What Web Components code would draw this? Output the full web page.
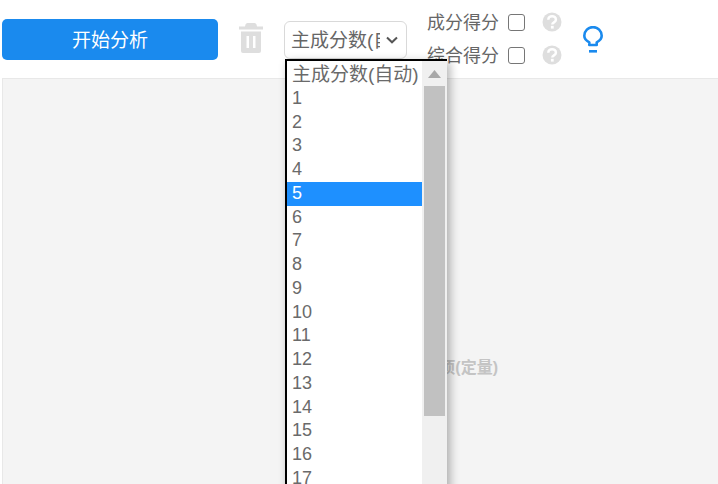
<!DOCTYPE html>
<html lang="zh">
<head>
<meta charset="utf-8">
<title>分析</title>
<style>
  html, body { margin: 0; height: 100%; overflow: hidden; background: #fff; }
  body { font-family: "Liberation Sans", "Noto Sans CJK SC", sans-serif; color: #666; }
</style>
</head>
<body>
<analysis-page>
  <analysis-toolbar slot="toolbar">
    <start-button>开始分析</start-button>
    <trash-button></trash-button>
    <component-select></component-select>
    <score-options></score-options>
    <hint-bulb></hint-bulb>
  </analysis-toolbar>
  <drop-panel slot="panel">分析项(定量)</drop-panel>
</analysis-page>

<script>
  class AnalysisPage extends HTMLElement {
    constructor() {
      super();
      this.attachShadow({ mode: 'open' });
      this.shadowRoot.innerHTML = `
        <style>
          :host { display: flex; flex-direction: column; width: 718px; height: 484px; overflow: hidden; }
        </style>
        <slot name="toolbar"></slot>
        <slot name="panel"></slot>
      `;
    }
  }

  class AnalysisToolbar extends HTMLElement {
    constructor() {
      super();
      this.attachShadow({ mode: 'open' });
      this.shadowRoot.innerHTML = `
        <style>
          :host { display: flex; flex: none; align-items: flex-start; height: 78px; padding: 0 0 0 2px; position: relative; z-index: 2; }
        </style>
        <slot></slot>
      `;
    }
  }

  class StartButton extends HTMLElement {
    constructor() {
      super();
      this.attachShadow({ mode: 'open' });
      this.shadowRoot.innerHTML = `
        <style>
          :host { display: block; margin-top: 19px; }
          button {
            display: block; width: 216px; height: 41px; padding: 0 0 2px; border: 0; border-radius: 5px;
            background: #1a8aee; color: #fff; font: 19px "Liberation Sans", "Noto Sans CJK SC", sans-serif;
          }
        </style>
        <button type="button"><slot></slot></button>
      `;
    }
  }

  class TrashButton extends HTMLElement {
    constructor() {
      super();
      this.attachShadow({ mode: 'open' });
      this.shadowRoot.innerHTML = `
        <style>
          :host { display: block; margin: 23px 0 0 21px; width: 24px; height: 30px; }
          svg { display: block; }
        </style>
        <svg width="24" height="30" viewBox="0 0 24 30">
          <path fill="#dedede" fill-rule="evenodd" d="M8.500 0h7q1.500 0 2 1.500L18 3.500h6v3H0v-3h6l.5-2Q7 0 8.500 0zM2 8.500h20V28q0 2-2 2H4q-2 0-2-2zM7.500 13v12h2.500V13zM14 13v12h2.500V13z"/>
        </svg>
      `;
    }
  }

  class ComponentSelect extends HTMLElement {
    constructor() {
      super();
      this.attachShadow({ mode: 'open' });
      const options = ['主成分数(自动)'];
      for (let i = 1; i <= 20; i++) options.push(String(i));
      const rows = options.map((text, i) =>
        `<div class="option${i === 0 ? ' title' : ''}${text === '5' ? ' selected' : ''}">${text}</div>`).join('');
      this.shadowRoot.innerHTML = `
        <style>
          :host { display: block; position: relative; margin: 21px 0 0 21px; width: 123px; height: 38px; }
          .field {
            box-sizing: border-box; display: flex; align-items: center; width: 123px; height: 38px;
            padding: 0 6px 4px; border: 1px solid #d9d9d9; border-radius: 6px; background: #fff;
            font-size: 19px; color: #666;
          }
          .value { width: 89px; overflow: hidden; white-space: nowrap; }
          .field svg { margin: 4px 0 0 6px; flex: none; }
          .list {
            position: absolute; left: 1px; top: 38px; box-sizing: border-box;
            display: flex; width: 162px; height: 440px;
            border-top: 2px solid #000; border-left: 2px solid #000; background: #fff;
            box-shadow: 3px 3px 9px rgba(0, 0, 0, .3);
          }
          .options { flex: 1; min-width: 0; padding-top: 2px; }
          .option { box-sizing: border-box; height: 23.75px; line-height: 23.75px; padding-left: 5px; font-size: 18px; color: #6a6a6a; white-space: nowrap; }
          .title { font-size: 19px; }
          .selected { background: #1e90ff; color: #fff; }
          .scroll { box-sizing: border-box; flex: none; width: 25px; padding: 0 2px; background: #f0f0f0; }
          .arrow { height: 25px; display: flex; align-items: center; justify-content: center; }
          .thumb { height: 330px; background: #c1c1c1; }
        </style>
        <div class="field">
          <span class="value">主成分数(自动)</span>
          <svg width="12" height="8" viewBox="0 0 12 8">
            <path d="M1 1.500l5 4.800 5-4.800" fill="none" stroke="#555" stroke-width="2"/>
          </svg>
        </div>
        <div class="list">
          <div class="options">${rows}</div>
          <div class="scroll">
            <div class="arrow">
              <svg width="13" height="8" viewBox="0 0 13 8"><path d="M6.500 0L13 8H0z" fill="#a8a8a8"/></svg>
            </div>
            <div class="thumb"></div>
          </div>
        </div>
      `;
    }
  }

  class ScoreOptions extends HTMLElement {
    constructor() {
      super();
      this.attachShadow({ mode: 'open' });
      const row = (text) => `
        <div class="row">
          <span class="name">${text}</span>
          <span class="box"></span>
          <svg width="20" height="20" viewBox="0 0 20 20">
            <circle cx="10" cy="10" r="9.500" fill="#dedede"/>
            <path d="M6.300 7.800c0-4.900 7.600-4.900 7.600 0 0 2.800-3.600 2.400-3.600 4.800" fill="none" stroke="#fff" stroke-width="2.500"/>
            <rect x="8.900" y="13.800" width="2.800" height="2.800" fill="#fff"/>
          </svg>
        </div>`;
      this.shadowRoot.innerHTML = `
        <style>
          :host { display: flex; flex-direction: column; gap: 9px; margin: 10px 0 0 20px; }
          .row { display: flex; align-items: center; height: 24px; }
          .name { width: 81px; padding-bottom: 3px; font-size: 18px; color: #666; white-space: nowrap; }
          .box { box-sizing: border-box; width: 17px; height: 17px; border: 1.500px solid #767676; border-radius: 3px; background: #fff; }
          svg { display: block; margin-left: 17px; }
        </style>
        ${row('成分得分')}
        ${row('综合得分')}
      `;
    }
  }

  class HintBulb extends HTMLElement {
    constructor() {
      super();
      this.attachShadow({ mode: 'open' });
      this.shadowRoot.innerHTML = `
        <style>
          :host { display: block; margin: 26px 0 0 21px; width: 20px; height: 27px; }
          svg { display: block; }
        </style>
        <svg width="20" height="27" viewBox="0 0 20 27">
          <path d="M6.300 19v-2.700C3.300 14.800 1.300 12.500 1.300 9.800a8.700 8.700 0 0 1 17.400 0c0 2.700-2 5-5 6.500V19z" fill="none" stroke="#1a8aee" stroke-width="2.600" stroke-linejoin="round"/>
          <rect x="6" y="24" width="8" height="2.600" fill="#1a8aee"/>
        </svg>
      `;
    }
  }

  class DropPanel extends HTMLElement {
    constructor() {
      super();
      this.attachShadow({ mode: 'open' });
      this.shadowRoot.innerHTML = `
        <style>
          :host {
            display: block; box-sizing: border-box; flex: none; height: 420px; width: 730px; margin-left: 2px;
            padding: 279px 233px 0 0;
            border: 1px solid #e8e8e8; background: #f4f4f4; text-align: right;
            font-size: 16px; font-weight: 700; line-height: 20px; color: #c4c4c4;
          }
        </style>
        <slot></slot>
      `;
    }
  }

  customElements.define('analysis-page', AnalysisPage);
  customElements.define('analysis-toolbar', AnalysisToolbar);
  customElements.define('start-button', StartButton);
  customElements.define('trash-button', TrashButton);
  customElements.define('component-select', ComponentSelect);
  customElements.define('score-options', ScoreOptions);
  customElements.define('hint-bulb', HintBulb);
  customElements.define('drop-panel', DropPanel);
</script>
</body>
</html>
